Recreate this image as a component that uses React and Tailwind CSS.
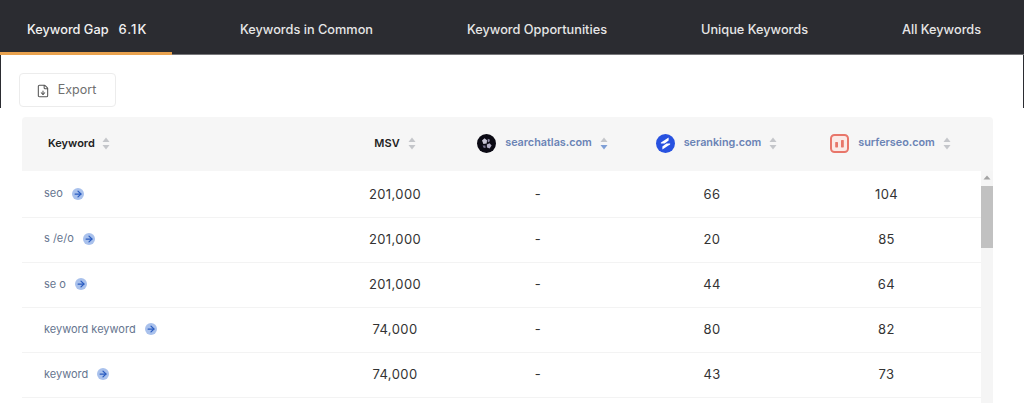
import React from 'react';
import { FileDown, ArrowRight } from 'lucide-react';

const tabs = [
  { label: 'Keywords in Common', className: 'w-[133px] ml-[68px]' },
  { label: 'Keyword Opportunities', className: 'w-[140px] ml-[94px]' },
  { label: 'Unique Keywords', className: 'w-[107px] ml-[94px]' },
  { label: 'All Keywords', className: 'w-[79px] ml-[94px]' },
];

const rows = [
  { keyword: 'seo', msv: '201,000', a: '66', b: '104' },
  { keyword: 's /e/o', msv: '201,000', a: '20', b: '85' },
  { keyword: 'se o', msv: '201,000', a: '44', b: '64' },
  { keyword: 'keyword keyword', msv: '74,000', a: '80', b: '82' },
  { keyword: 'keyword', msv: '74,000', a: '43', b: '73' },
];

const SortIcon = ({ active }) => (
  <svg width="8" height="13" viewBox="0 0 8 13" className="shrink-0">
    <path d="M4 0.5L7.5 5H0.5Z" fill="#c4c6ca" />
    <path d="M4 12.5L0.5 8H7.5Z" fill={active ? '#7f9fd6' : '#c4c6ca'} />
  </svg>
);

const SearchAtlasLogo = () => (
  <svg width="19" height="19" viewBox="0 0 19 19" className="shrink-0">
    <circle cx="9.5" cy="9.5" r="9.5" fill="#0b0a14" />
    <path d="M5 6.5L7.5 4.2L10 6.2L9.6 9.4L6.4 10Z" fill="#c9c6d6" />
    <path d="M10.8 4.8L13 5.8L12 8.2L10.6 7.4Z" fill="#8d88a6" />
    <path d="M9.8 10.4L12.6 9.2L14.6 11.6L12.6 14.6L10 13.4Z" fill="#b3afc6" />
    <path d="M5.6 11.4L8.4 11.6L8.6 14L6.6 13.8Z" fill="#77728f" />
  </svg>
);

const SerankingLogo = () => (
  <svg width="19" height="19" viewBox="0 0 19 19" className="shrink-0">
    <circle cx="9.5" cy="9.5" r="9.5" fill="#2852e0" />
    <path d="M12.6 3.6L5 8.6C4.6 9 4.8 9.6 5.3 9.6H8.6L12.6 6.6Z" fill="#ffffff" />
    <path d="M6.4 15.4L14 10.4C14.4 10 14.2 9.4 13.7 9.4H10.4L6.4 12.4Z" fill="#ffffff" />
  </svg>
);

const SurferLogo = () => (
  <svg width="19" height="19" viewBox="0 0 19 19" className="shrink-0">
    <rect x="1" y="1" width="17" height="17" rx="3.5" fill="#fbeae7" stroke="#e8766a" strokeWidth="2" />
    <rect x="5.2" y="8" width="2.8" height="5.4" rx="0.6" fill="#e8766a" />
    <rect x="11" y="6" width="2.8" height="7.4" rx="0.6" fill="#e8766a" />
  </svg>
);

const DomainHeader = ({ logo, name, active }) => (
  <div className="flex items-center justify-center pl-[9px]">
    {logo}
    <span className="text-[10.8px] font-semibold text-[#6a83b5] ml-[9px] mr-[8px]">{name}</span>
    <SortIcon active={active} />
  </div>
);

export default function App() {
  return (
    <div className="w-[1024px] h-[403px] overflow-hidden bg-white font-['Inter',sans-serif]">
      <div className="h-[108px] border-x border-[#2b2c31]">
        <div className="h-[55px] -mx-px bg-[#2b2c31] border-b border-[#77777a] flex items-stretch">
          <div className="w-[172px] pl-[27px] pt-[8px] flex items-center border-b-[3px] border-[#e9a24e] -mb-px">
            <span className="text-[12.75px] font-medium text-[#f2f2f2]">Keyword Gap</span>
            <span className="text-[13px] font-medium tracking-[1px] text-[#f2f2f2] ml-[10px]">6.1K</span>
          </div>
          {tabs.map((tab) => (
            <div key={tab.label} className={`flex items-center justify-center pt-[6px] whitespace-nowrap text-[12.75px] font-medium text-[#e6e6e6] ${tab.className}`}>
              {tab.label}
            </div>
          ))}
        </div>
        <div className="pl-[18px] pt-[18px]">
          <button className="w-[97px] h-[34px] flex items-center justify-center gap-[8px] pr-[3px] pt-[1px] border border-[#ececec] rounded-[4px] bg-white text-[#6f6f6f] text-[12.5px]">
            <FileDown size={14} strokeWidth={1.8} className="text-[#555]" />
            Export
          </button>
        </div>
      </div>

      <div className="ml-[22px] mt-[9px] w-[971px]">
        <div className="h-[54px] pb-[1px] bg-[#f6f6f6] rounded-t-[4px] grid grid-cols-[317px_112px_174px_174px_174px] items-center">
          <div className="flex items-center gap-[7px] pl-[26px]">
            <span className="text-[11px] font-semibold text-[#222]">Keyword</span>
            <SortIcon />
          </div>
          <div className="flex items-center justify-center gap-[8px]">
            <span className="text-[11px] font-semibold text-[#222]">MSV</span>
            <SortIcon />
          </div>
          <DomainHeader logo={<SearchAtlasLogo />} name="searchatlas.com" active />
          <DomainHeader logo={<SerankingLogo />} name="seranking.com" />
          <DomainHeader logo={<SurferLogo />} name="surferseo.com" />
        </div>

        <div className="flex">
          <div className="w-[959px] pt-[1.5px]">
            {rows.map((row) => (
              <div key={row.keyword} className="h-[45.15px] border-b border-[#f3f3f3] grid grid-cols-[317px_112px_174px_174px_166px] items-center text-[13px] tracking-[0.4px] text-[#333]">
                <div className="flex items-center gap-[9px] pl-[22px] -translate-y-px">
                  <span className="text-[11px] tracking-normal text-[#66758f]">{row.keyword}</span>
                  <span className="w-[12px] h-[12px] rounded-full bg-[#a9c1ec] flex items-center justify-center">
                    <ArrowRight size={10} strokeWidth={3} className="text-[#2a5cc0]" />
                  </span>
                </div>
                <div className="text-center">{row.msv}</div>
                <div className="text-center">-</div>
                <div className="text-center">{row.a}</div>
                <div className="text-center pl-[9px]">{row.b}</div>
              </div>
            ))}
          </div>
          <div className="w-[12px] h-[240px] bg-[#f5f5f5] flex flex-col items-center">
            <svg width="8" height="15" viewBox="0 0 8 15" className="shrink-0">
              <path d="M4 4.5L7.5 8.5H0.5Z" fill="#a3a3a3" />
            </svg>
            <div className="w-full h-[62px] bg-[#c1c1c1]" />
          </div>
        </div>
      </div>
    </div>
  );
}
